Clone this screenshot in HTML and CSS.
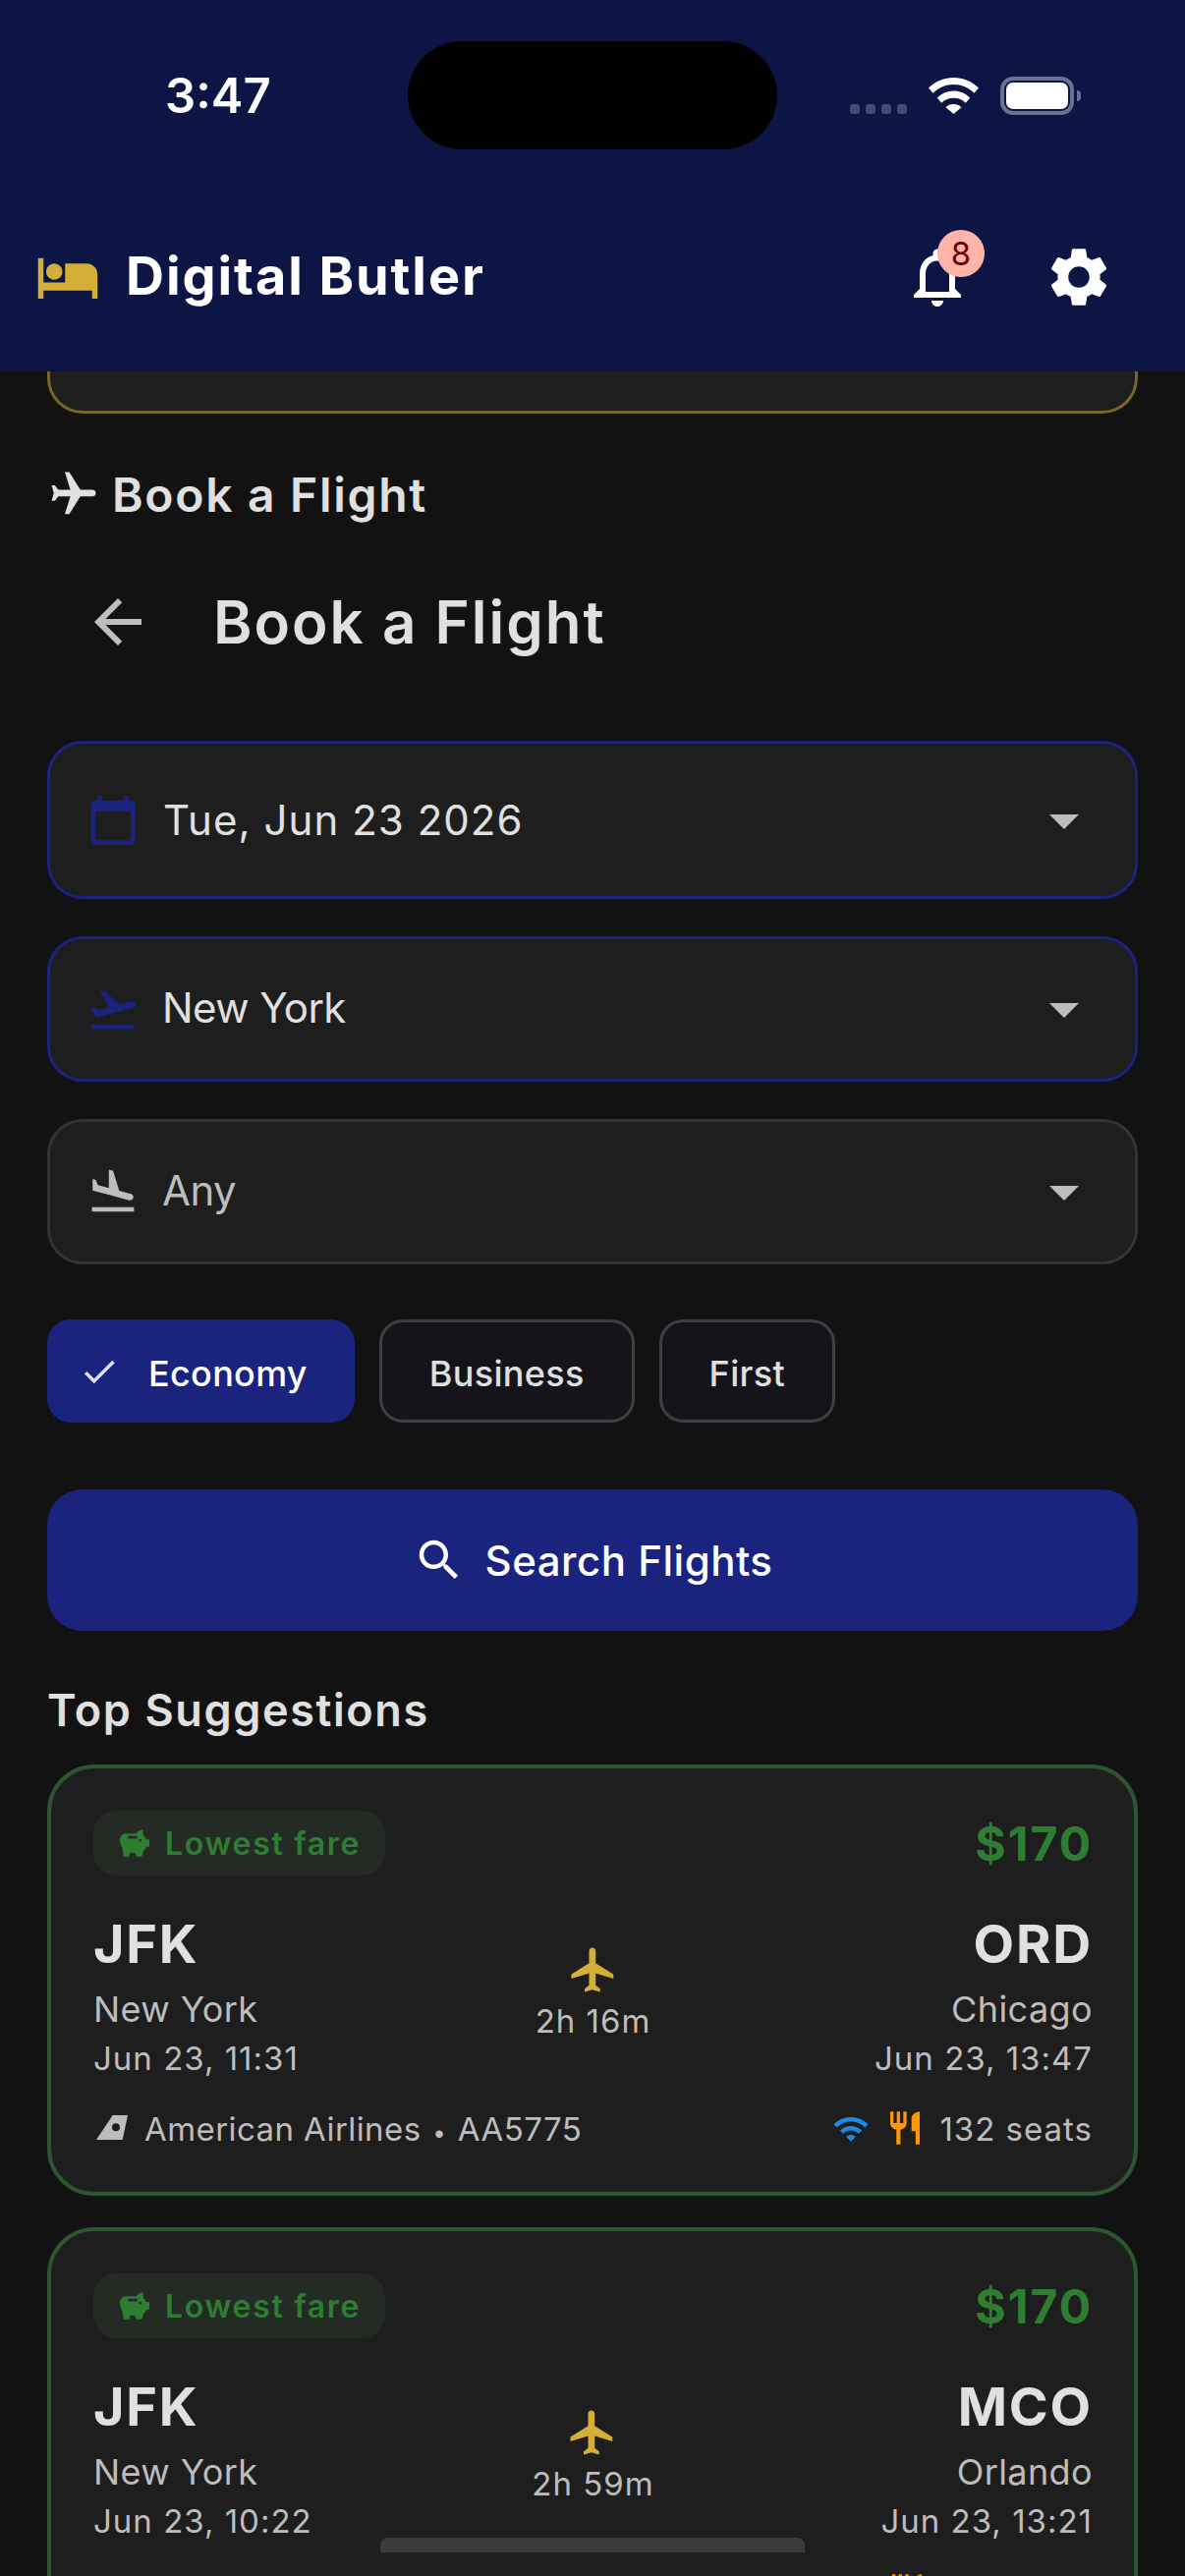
FILE: index.html
```html
<!DOCTYPE html>
<html lang="en">
<head>
    <meta charset="UTF-8">
    <meta name="viewport" content="width=device-width, initial-scale=1.0">
    <title>Digital Butler</title>
    <link rel="stylesheet" href="styles.css">
</head>
<body>
    <svg class="sprite" xmlns="http://www.w3.org/2000/svg">
        <symbol id="i-flight" viewBox="0 0 24 24"><path d="M21 16v-2l-8-5V3.500c0-.83-.67-1.500-1.500-1.500S10 2.670 10 3.500V9l-8 5v2l8-2.500V19l-2 1.500V22l3.500-1 3.500 1v-1.500L13 19v-5.500l8 2.500z"/></symbol>
        <symbol id="i-drop" viewBox="0 0 24 24"><path d="M7 10l5 5 5-5z"/></symbol>
        <symbol id="i-savings" viewBox="0 0 90 83"><path fill-rule="evenodd" d="M70 0C60 2 54 6 49 12H20C8 12 0 20 0 32c0 10 4 18 8 26l3 25h17l3-12h16l3 12h17l5-17c4-3 7-7 9-13h9V30h-9c-2-5-5-9-9-12zM25 20h28v8H25zm37 9a4 4 0 1 1 0 8 4 4 0 0 1 0-8z"/></symbol>
        <symbol id="i-airline" viewBox="0 0 32 25"><path fill-rule="evenodd" d="M16.700 0H32l-5.300 25H0zM20 8.300a4 4 0 1 0 0 8 4 4 0 0 0 0-8z"/></symbol>
        <symbol id="i-wifi" viewBox="0 0 24 24"><path d="M1 9l2 2c4.970-4.970 13.030-4.970 18 0l2-2C16.930 2.930 7.080 2.930 1 9zm8 8l3 3 3-3c-1.650-1.660-4.340-1.660-6 0zm-4-4l2 2c2.760-2.760 7.240-2.760 10 0l2-2C15.140 9.140 8.870 9.140 5 13z"/></symbol>
        <symbol id="i-food" viewBox="0 0 24 24"><path d="M11 9H9V2H7v7H5V2H3v7c0 2.120 1.660 3.840 3.750 3.970V22h2.500v-9.030C11.340 12.840 13 11.120 13 9V2h-2v7zm5-3v8h2.500v8H21V2c-2.760 0-5 2.240-5 4z"/></symbol>
    </svg>

    <header class="topbar">
        <div class="status">
            <span class="clock">3:47</span>
            <span class="island"></span>
            <div class="status-right">
                <span class="signal"><i></i><i></i><i></i><i></i></span>
                <svg class="status-wifi" viewBox="0 0 51 37"><path d="M25.500 0C16 0 7.200 3.500 0 10.500l4.500 5.200C10.500 10 17.500 7 25.500 7s15 3 21 8.700l4.500-5.200C43.800 3.500 35 0 25.500 0zm0 13.500c-6.300 0-12 2.400-16.800 7l4.500 5.200c3.300-3.200 7.500-5 12.300-5s9 1.800 12.300 5l4.500-5.200c-4.800-4.600-10.500-7-16.800-7zm0 13.500c-3 0-5.700 1.200-8 3.200l8 6.800 8-6.800c-2.300-2-5-3.200-8-3.200z"/></svg>
                <span class="battery"><span class="battery-level"></span></span>
                <span class="battery-nub"></span>
            </div>
        </div>
        <div class="appbar">
            <svg class="ic-brand" viewBox="0 0 24 24"><path d="M7 13c1.660 0 3-1.340 3-3S8.660 7 7 7s-3 1.340-3 3 1.340 3 3 3zm12-6h-8v7H3V5H1v15h2v-3h18v3h2v-9c0-2.210-1.790-4-4-4z"/></svg>
            <span class="app-title">Digital Butler</span>
            <div class="bell">
                <svg class="ic-action" viewBox="0 0 24 24"><path d="M12 22c1.100 0 2-.9 2-2h-4c0 1.100.9 2 2 2zm6-6v-5c0-3.070-1.630-5.640-4.500-6.320V4c0-.83-.67-1.500-1.500-1.500s-1.500.67-1.500 1.500v.68C7.640 5.360 6 7.920 6 11v5l-2 2v1h16v-1l-2-2zm-2 1H8v-6c0-2.480 1.510-4.500 4-4.500s4 2.020 4 4.500v6z"/></svg>
                <span class="badge">8</span>
            </div>
            <svg class="ic-action" viewBox="0 0 24 24"><path d="M19.140 12.940c.04-.3.06-.61.06-.94 0-.32-.02-.64-.07-.94l2.030-1.580c.18-.14.23-.41.12-.61l-1.920-3.320c-.12-.22-.37-.29-.59-.22l-2.390.96c-.5-.38-1.030-.7-1.620-.94l-.36-2.540c-.04-.24-.24-.41-.48-.41h-3.840c-.24 0-.43.17-.47.41l-.36 2.540c-.59.24-1.130.57-1.620.94l-2.390-.96c-.22-.08-.47 0-.59.22L2.740 8.870c-.12.21-.08.47.12.61l2.030 1.580c-.05.3-.09.63-.09.94s.02.64.07.94l-2.030 1.580c-.18.14-.23.41-.12.61l1.920 3.320c.12.22.37.29.59.22l2.390-.96c.5.38 1.030.7 1.620.94l.36 2.540c.05.24.24.41.48.41h3.840c.24 0 .44-.17.47-.41l.36-2.540c.59-.24 1.130-.56 1.620-.94l2.390.96c.22.08.47 0 .59-.22l1.920-3.320c.12-.22.07-.47-.12-.61l-2.010-1.580zM12 15.600c-1.980 0-3.600-1.620-3.600-3.600s1.620-3.600 3.600-3.600 3.600 1.620 3.600 3.600-1.620 3.600-3.600 3.600z"/></svg>
        </div>
    </header>

    <main class="content">
        <div class="prev-card"></div>

        <h3 class="section-title">
            <svg class="ic-plane-side" viewBox="0 0 24 24"><use href="#i-flight"/></svg>
            Book a Flight
        </h3>

        <div class="page-head">
            <svg class="ic-back" viewBox="0 0 24 24"><path d="M20 11H7.830l5.590-5.590L12 4l-8 8 8 8 1.410-1.410L7.830 13H20v-2z"/></svg>
            <h2>Book a Flight</h2>
        </div>

        <div class="field field-date active">
            <svg class="field-icon" viewBox="0 0 24 24"><path d="M20 3h-1V1h-2v2H7V1H5v2H4c-1.100 0-2 .9-2 2v16c0 1.100.9 2 2 2h16c1.100 0 2-.9 2-2V5c0-1.100-.9-2-2-2zm0 18H4V8h16v13z"/></svg>
            <span class="field-text date-text">Tue, Jun 23 2026</span>
            <svg class="drop"><use href="#i-drop"/></svg>
        </div>
        <div class="field active">
            <svg class="field-icon" viewBox="0 0 24 24"><path d="M2.500 19h19v2h-19zm19.570-9.360c-.21-.8-1.040-1.280-1.840-1.060L14.920 10l-6.900-6.430-1.930.51 4.140 7.170-4.970 1.330-1.970-1.540-1.450.39 1.820 3.160.77 1.330 1.600-.43 5.310-1.420 4.350-1.160L21 11.490c.81-.23 1.280-1.050 1.070-1.850z"/></svg>
            <span class="field-text">New York</span>
            <svg class="drop"><use href="#i-drop"/></svg>
        </div>
        <div class="field">
            <svg class="field-icon" viewBox="0 0 24 24"><path d="M2.500 19h19v2h-19zm7.180-5.730l4.350 1.160 5.310 1.420c.8.210 1.620-.26 1.840-1.060.21-.8-.26-1.620-1.060-1.840l-5.310-1.420-2.760-9.020L10.120 2v8.280L5.150 8.950l-.93-2.320-1.450-.39v5.170l1.600.43 5.310 1.430z"/></svg>
            <span class="field-text muted">Any</span>
            <svg class="drop"><use href="#i-drop"/></svg>
        </div>

        <div class="chips">
            <span class="chip selected">
                <svg class="ic-check" viewBox="0 0 24 24"><path d="M9 16.170L4.830 12l-1.420 1.410L9 19 21 7l-1.410-1.410z"/></svg>
                Economy
            </span>
            <span class="chip">Business</span>
            <span class="chip">First</span>
        </div>

        <button class="search-btn">
            <svg class="ic-search" viewBox="0 0 24 24"><path d="M15.500 14h-.79l-.28-.27C15.410 12.590 16 11.110 16 9.500 16 5.910 13.090 3 9.500 3S3 5.910 3 9.500 5.910 16 9.500 16c1.610 0 3.090-.59 4.230-1.570l.27.28v.79l5 4.990L20.490 19l-4.990-5zm-6 0C7.010 14 5 11.990 5 9.500S7.010 5 9.500 5 14 7.010 14 9.500 11.990 14 9.500 14z"/></svg>
            Search Flights
        </button>

        <h3 class="list-title">Top Suggestions</h3>

        <article class="flight">
            <div class="flight-top">
                <span class="tag"><svg class="ic-tag"><use href="#i-savings"/></svg>Lowest fare</span>
                <span class="price">$170</span>
            </div>
            <div class="route">
                <div class="stop">
                    <div class="code">JFK</div>
                    <div class="city">New York</div>
                    <div class="when">Jun 23, 11:31</div>
                </div>
                <div class="leg">
                    <svg class="ic-leg"><use href="#i-flight"/></svg>
                    <span class="leg-time">2h 16m</span>
                </div>
                <div class="stop right">
                    <div class="code">ORD</div>
                    <div class="city">Chicago</div>
                    <div class="when">Jun 23, 13:47</div>
                </div>
            </div>
            <div class="flight-foot">
                <svg class="ic-airline"><use href="#i-airline"/></svg>
                <span class="carrier">American Airlines <span class="dot">•</span> AA5775</span>
                <svg class="ic-wifi"><use href="#i-wifi"/></svg>
                <svg class="ic-food"><use href="#i-food"/></svg>
                <span class="seats">132 seats</span>
            </div>
        </article>

        <article class="flight">
            <div class="flight-top">
                <span class="tag"><svg class="ic-tag"><use href="#i-savings"/></svg>Lowest fare</span>
                <span class="price">$170</span>
            </div>
            <div class="route">
                <div class="stop">
                    <div class="code">JFK</div>
                    <div class="city">New York</div>
                    <div class="when">Jun 23, 10:22</div>
                </div>
                <div class="leg">
                    <svg class="ic-leg"><use href="#i-flight"/></svg>
                    <span class="leg-time">2h 59m</span>
                </div>
                <div class="stop right">
                    <div class="code">MCO</div>
                    <div class="city">Orlando</div>
                    <div class="when">Jun 23, 13:21</div>
                </div>
            </div>
            <!-- only the top of the food icon is on screen here -->
            <div class="flight-foot foot-cut">
                <svg class="ic-food"><use href="#i-food"/></svg>
            </div>
        </article>
    </main>

    <div class="home-bar"></div>
</body>
</html>
```

FILE: styles.css
```css
html, body {
    margin: 0;
    padding: 0;
}

body {
    position: relative;
    width: 1206px;
    height: 2622px;
    overflow: hidden;
    background-color: #121212;
    color: #e0e0e0;
    font-family: Inter, "Noto Sans", sans-serif;
}

svg {
    display: block;
    flex: none;
    fill: currentColor;
}

.sprite {
    display: none;
}

h2, h3 {
    margin: 0;
}

/* Top bar */
.topbar {
    height: 378px;
    background-color: #0d1544;
    color: white;
}

.status {
    display: flex;
    align-items: flex-start;
    height: 222px;
}

.clock {
    width: 247px;
    margin: 71px 0 0 168px;
    font-size: 49px;
    font-weight: 600;
    line-height: 53px;
}

.island {
    width: 376px;
    height: 110px;
    margin-top: 42px;
    background-color: black;
    border-radius: 55px;
}

.status-right {
    display: flex;
    align-items: flex-start;
    margin-left: 74px;
}

.signal {
    display: flex;
    gap: 6px;
    margin-top: 106px;
}

.signal i {
    width: 10px;
    height: 10px;
    background-color: #444b70;
    border-radius: 3px;
}

.status-wifi {
    width: 51px;
    height: 37px;
    margin: 79px 0 0 22px;
}

.battery {
    box-sizing: border-box;
    width: 75px;
    height: 39px;
    margin: 78px 0 0 22px;
    padding: 2px;
    border: 4px solid #6b7193;
    border-radius: 13px;
}

.battery-level {
    display: block;
    height: 100%;
    background-color: white;
    border-radius: 7px;
}

.battery-nub {
    width: 4px;
    height: 11px;
    margin: 92px 0 0 3px;
    background-color: #6b7193;
    border-radius: 0 4px 4px 0;
}

.appbar {
    display: flex;
    align-items: center;
    height: 120px;
    padding-left: 36px;
}

.ic-brand {
    width: 66px;
    height: 66px;
    color: #d4af37;
}

.app-title {
    flex: 1;
    margin: 0 0 3px 26px;
    font-size: 54px;
    font-weight: 700;
    letter-spacing: 1.9px;
}

.bell {
    position: relative;
}

.ic-action {
    width: 72px;
    height: 72px;
    margin-right: 72px;
}

.badge {
    position: absolute;
    top: -12px;
    left: 36px;
    width: 48px;
    height: 48px;
    background-color: #ffb4ab;
    border-radius: 50%;
    color: #690005;
    font-size: 33px;
    line-height: 48px;
    text-align: center;
}

/* Form */
.content {
    padding: 0 48px;
}

.prev-card {
    box-sizing: border-box;
    height: 43px;
    background-color: #1e1e1e;
    border: 3px solid #7a6528;
    border-top: none;
    border-radius: 0 0 36px 36px;
}

.section-title {
    display: flex;
    align-items: center;
    gap: 12px;
    height: 60px;
    margin-top: 52px;
    font-size: 48px;
    font-weight: 600;
    letter-spacing: 1.7px;
}

.ic-plane-side {
    width: 54px;
    height: 54px;
    transform: rotate(90deg);
}

.page-head {
    display: flex;
    align-items: center;
    height: 144px;
    margin-top: 28px;
    padding-left: 36px;
}

.ic-back {
    width: 72px;
    height: 72px;
    color: #bdbdbd;
}

.page-head h2 {
    margin-left: 61px;
    font-size: 60px;
    font-weight: 600;
    letter-spacing: 2px;
}

.field {
    box-sizing: border-box;
    display: flex;
    align-items: center;
    height: 148px;
    margin-top: 38px;
    padding: 0 36px 0 37px;
    background-color: #1e1e1e;
    border: 3px solid #333;
    border-radius: 36px;
}

.field.active {
    border-color: #1a237e;
}

.field-date {
    height: 161px;
    margin-top: 49px;
}

.field.active .field-icon {
    color: #1a237e;
}

.field-icon {
    width: 54px;
    height: 54px;
    color: #bdbdbd;
}

.field-text {
    flex: 1;
    margin: 0 0 3px 23px;
    font-size: 42px;
    letter-spacing: -0.6px;
}

.date-text {
    margin: 0 0 0 24px;
    letter-spacing: 1.05px;
}

.muted {
    color: #bdbdbd;
}

.drop {
    width: 72px;
    height: 72px;
    color: #bdbdbd;
}

.chips {
    display: flex;
    gap: 25px;
    margin-top: 56px;
}

.chip {
    box-sizing: border-box;
    display: flex;
    align-items: center;
    height: 105px;
    padding: 4px 48px 0;
    background-color: #14141a;
    border: 3px solid #3f3f46;
    border-radius: 24px;
    font-size: 36px;
    font-weight: 500;
    letter-spacing: 0.3px;
}

.chip.selected {
    padding: 4px 45px 0 29px;
    background-color: #1a237e;
    border-color: #1a237e;
    color: white;
}

.ic-check {
    width: 42px;
    height: 42px;
    margin: -4px 29px 0 0;
    color: #e0e0ff;
}

.search-btn {
    display: flex;
    align-items: center;
    justify-content: center;
    gap: 20px;
    width: 100%;
    height: 144px;
    margin-top: 68px;
    padding: 0;
    background-color: #1a237e;
    border: none;
    border-radius: 36px;
    color: white;
    font-family: inherit;
    font-size: 42px;
    font-weight: 500;
    letter-spacing: 0.5px;
}

.ic-search {
    width: 54px;
    height: 54px;
}

.list-title {
    height: 60px;
    margin-top: 51px;
    font-size: 45px;
    font-weight: 600;
    line-height: 60px;
    letter-spacing: 1.6px;
}

/* Flight cards */
.flight {
    box-sizing: border-box;
    height: 439px;
    margin: 25px 0 32px;
    padding: 43px 42px 43px 43px;
    background-color: #1e1e1e;
    border: 4px solid #2c5530;
    border-radius: 48px;
}

.flight-top {
    display: flex;
    align-items: center;
    justify-content: space-between;
    height: 66px;
}

.tag {
    display: flex;
    align-items: center;
    height: 66px;
    padding: 0 25px 0 27px;
    background-color: #242b24;
    border-radius: 24px;
    color: #2e7d32;
    font-size: 32px;
    font-weight: 600;
    letter-spacing: 1.7px;
}

.ic-tag {
    width: 30px;
    height: 28px;
    margin-right: 16px;
}

.price {
    color: #2e7d32;
    font-size: 48px;
    font-weight: 700;
    letter-spacing: 2px;
}

.route {
    display: grid;
    grid-template-columns: 1fr auto 1fr;
    margin-top: 40px;
}

.stop.right {
    text-align: right;
}

.code {
    font-size: 54px;
    font-weight: 700;
    line-height: 60px;
    letter-spacing: 1.8px;
}

.city {
    margin-top: 12px;
    color: #bdbdbd;
    font-size: 36px;
    line-height: 48px;
    letter-spacing: 0.4px;
}

.when {
    margin-top: 4px;
    color: #bdbdbd;
    font-size: 33px;
    line-height: 44px;
    letter-spacing: 1px;
}

.leg {
    display: flex;
    flex-direction: column;
    align-items: center;
    padding-top: 29px;
    color: #bdbdbd;
    font-size: 33px;
    line-height: 44px;
    letter-spacing: 1px;
}

.leg-time {
    margin-top: 3px;
}

.ic-leg {
    width: 54px;
    height: 54px;
    color: #d4af37;
}

.flight-foot {
    display: flex;
    align-items: center;
    height: 44px;
    margin-top: 28px;
    color: #bdbdbd;
    font-size: 33px;
    letter-spacing: 1px;
}

.ic-airline {
    width: 32px;
    height: 25px;
    margin: 0 17px 3px 3px;
}

.carrier {
    flex: 1;
    letter-spacing: 0.42px;
}

.dot {
    margin: 0 2px;
    font-size: 24px;
}

.ic-wifi {
    width: 38px;
    height: 38px;
    color: #1e88e5;
}

.ic-food {
    width: 40px;
    height: 40px;
    margin: 0 15px 3px 16px;
    color: #ff9800;
}

.foot-cut {
    justify-content: flex-end;
    padding-right: 169px;
}

.foot-cut .ic-food {
    margin: 0 0 3px;
}

.home-bar {
    position: absolute;
    left: 387px;
    top: 2583px;
    width: 432px;
    height: 15px;
    background-color: #3c3c3c;
    border-radius: 8px 8px 0 0;
}
```
